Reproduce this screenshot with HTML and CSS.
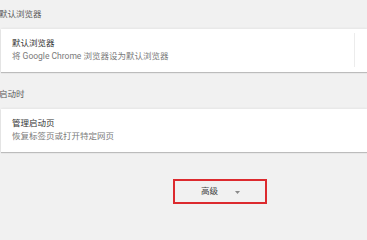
FILE: index.html
```html
<!DOCTYPE html>
<html lang="zh-CN">
<head>
<meta charset="utf-8">
<link rel="stylesheet" href="styles.css">
</head>
<body>
<div class="page">
  <div class="section-head first">默认浏览器</div>
  <div class="card">
    <div class="row">
      <div class="text">
        <div class="title">默认浏览器</div>
        <div class="sub">将 Google Chrome 浏览器设为默认浏览器</div>
      </div>
      <div class="sep"></div>
    </div>
  </div>
  <div class="section-head">启动时</div>
  <div class="card">
    <div class="row">
      <div class="text">
        <div class="title">管理启动页</div>
        <div class="sub">恢复标签页或打开特定网页</div>
      </div>
    </div>
  </div>
  <div class="adv-wrap">
    <div class="adv">
      <span class="adv-label">高级</span>
      <svg class="caret" width="5" height="3" viewBox="0 0 5 3"><path d="M0 0H5L2.5 3Z" fill="#8a8a8a"/></svg>
    </div>
  </div>
</div>
</body>
</html>
```
FILE: styles.css
```css
html, body {
  margin: 0;
  padding: 0;
  background: #f1f1f1;
  overflow: hidden;
}
body {
  width: 367px;
  height: 207px;
  font-family: Roboto, "Noto Sans CJK SC", sans-serif;
  font-size: 8.5px;
}
.section-head {
  color: #5a5a5a;
  line-height: 13px;
  padding: 16px 0 8px 0;
  margin-left: -1px;
}
.section-head.first {
  padding: 8px 0 8px 0;
}
.card {
  background: #fff;
  margin-left: 1px;
  box-shadow: 0 1px 1px rgba(0, 0, 0, 0.22), 0 -1px 2px rgba(0, 0, 0, 0.05);
}
.row {
  display: flex;
  align-items: center;
  padding: 8px 0 9px 0;
}
.text {
  flex: none;
  width: 342px;
  padding-left: 11px;
}
.title {
  color: #333;
  line-height: 13px;
}
.sub {
  color: #7a7a7a;
  line-height: 13px;
}
.sep {
  width: 1px;
  height: 34px;
  margin: -4px 0;
  background: #ececec;
}
.adv-wrap {
  padding: 27px 0 0 173px;
}
.adv {
  box-sizing: border-box;
  width: 94px;
  height: 25px;
  border: 2px solid #dc2a2e;
  display: flex;
  align-items: center;
  padding-left: 26px;
}
.adv-label {
  color: #444;
  line-height: 13px;
}
.caret {
  margin-left: 17px;
  margin-top: 1px;
}
```
